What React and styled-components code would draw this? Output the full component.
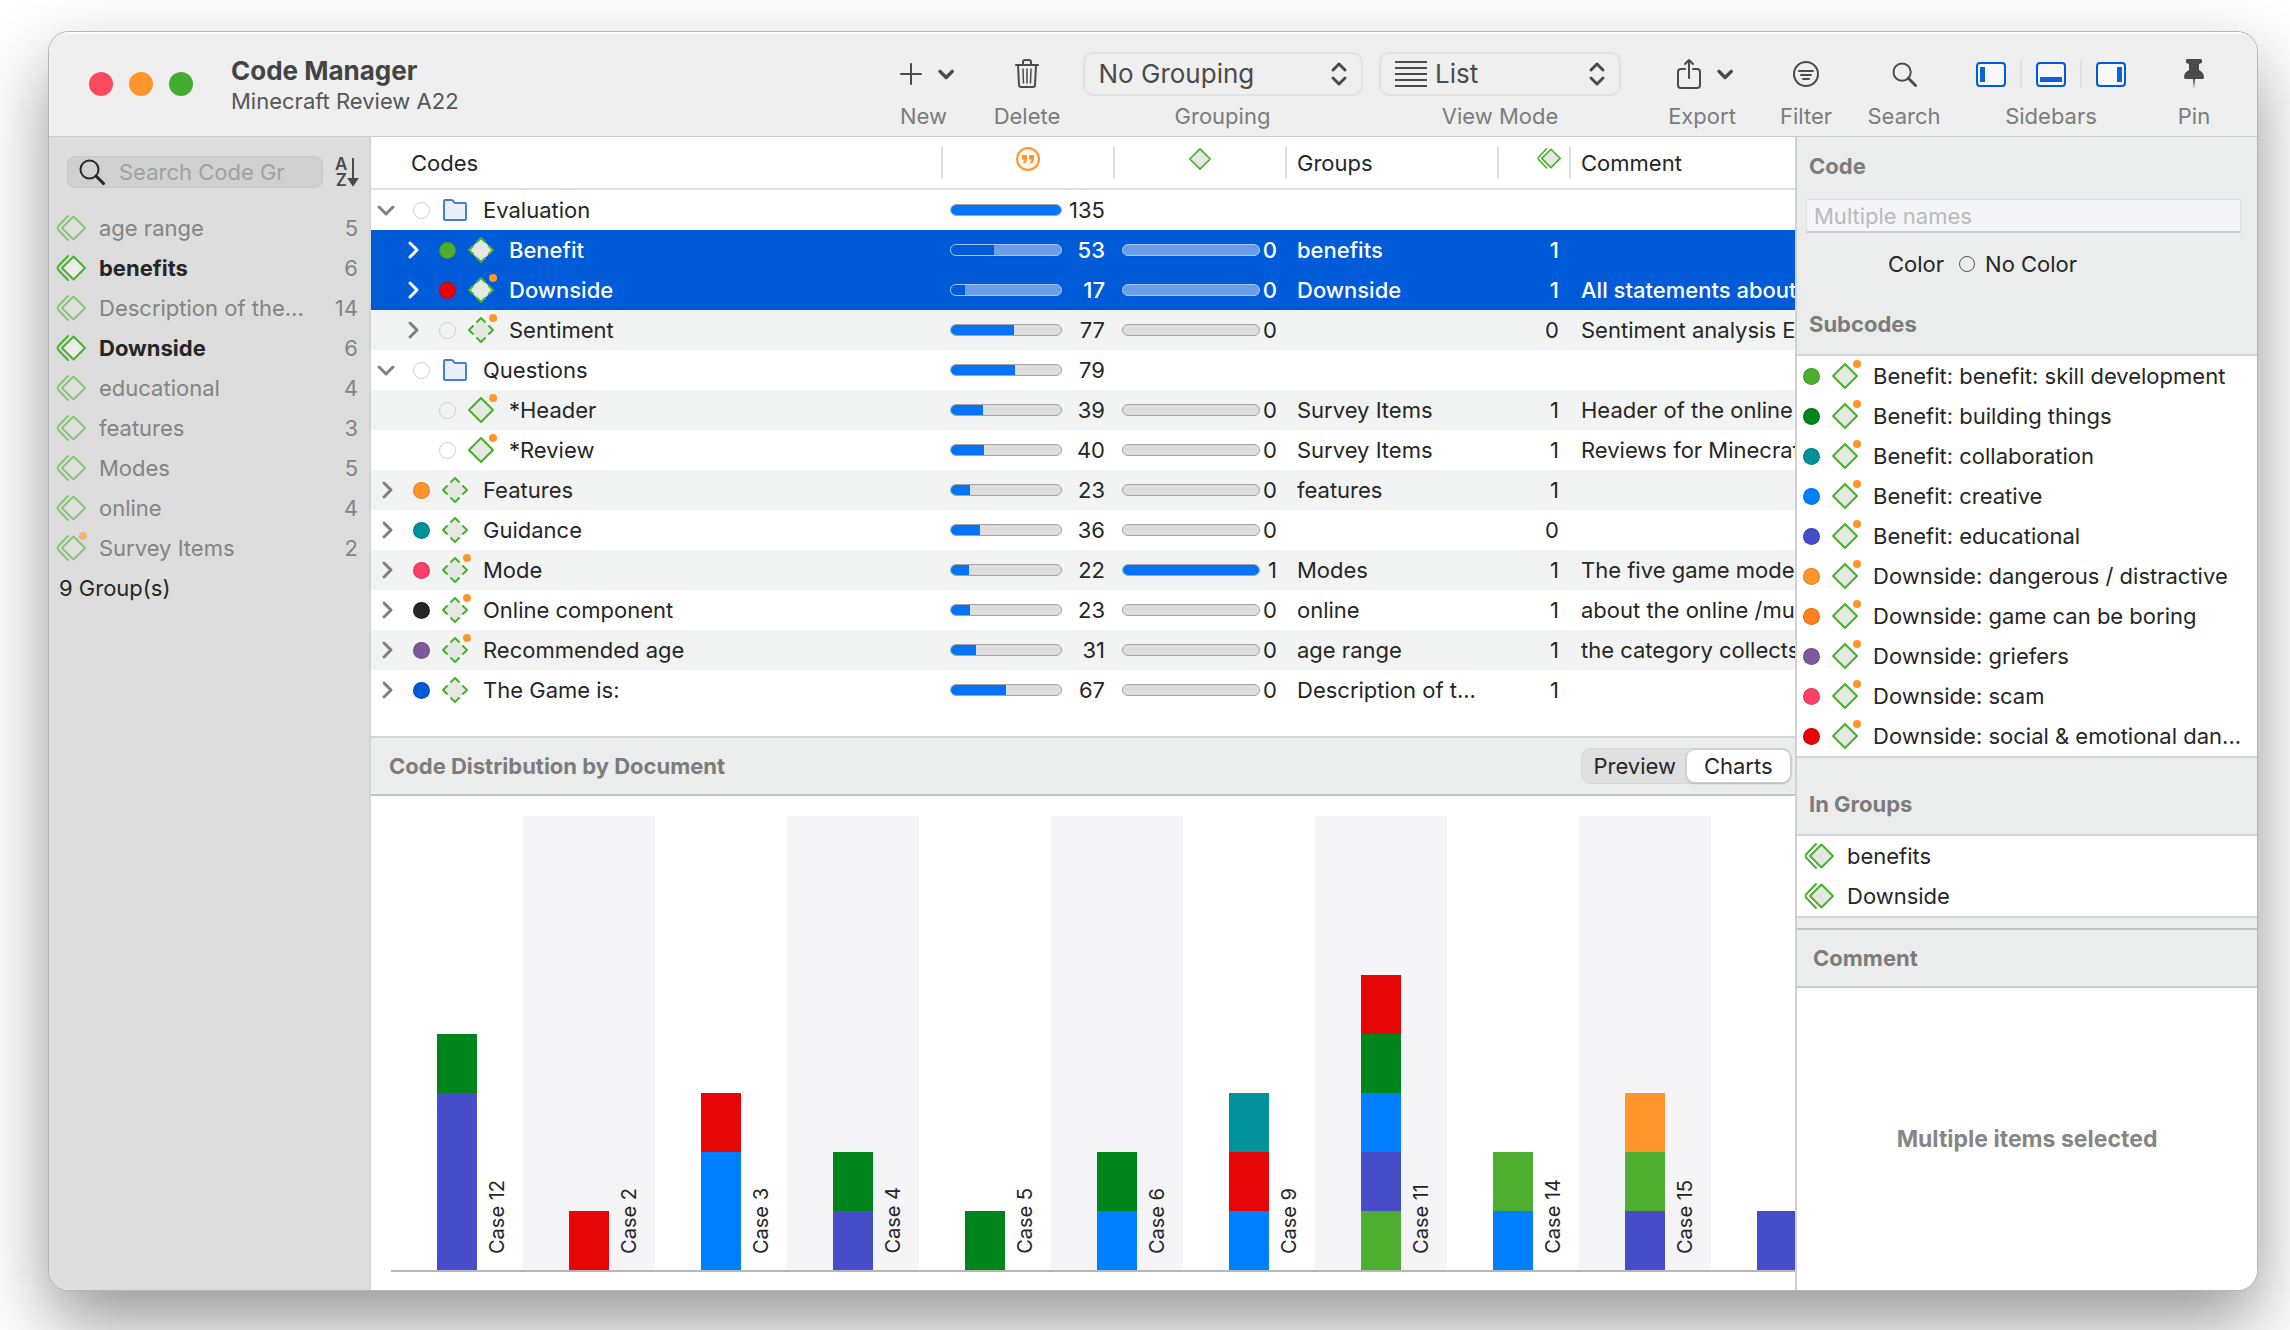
import React from "react";
import styled, { createGlobalStyle, css } from "styled-components";

const GlobalStyle = createGlobalStyle`
    * {
        box-sizing: border-box;
    }
    body {
        margin: 0;
        background: #ffffff;
        color: #262626;
        font-family: Inter, "Liberation Sans", sans-serif;
        font-size: 22px;
        line-height: 28px;
    }
    button, input, select {
        font: inherit;
        color: inherit;
        margin: 0;
        padding: 0;
        border: none;
        background: none;
    }
    h1, h2, p, ul {
        margin: 0;
        padding: 0;
    }
    ul {
        list-style: none;
    }
    svg {
        display: block;
        flex: none;
        overflow: visible;
    }
`

const GREEN = "#4eae30";
const DARK_GREEN = "#00851d";
const TEAL = "#00919b";
const BLUE = "#007fff";
const INDIGO = "#474dc9";
const ORANGE = "#ff952b";
const PURPLE = "#7d5a9e";
const PINK = "#fb4169";
const RED = "#e60608";

const groups = [
    { name: "age range", count: 5 },
    { name: "benefits", count: 6, active: true },
    { name: "Description of the...", count: 14 },
    { name: "Downside", count: 6, active: true },
    { name: "educational", count: 4 },
    { name: "features", count: 3 },
    { name: "Modes", count: 5 },
    { name: "online", count: 4 },
    { name: "Survey Items", count: 2, comment: true },
];

const codes = [
    { name: "Evaluation", folder: true, open: true, quotes: 135 },
    { name: "Benefit", level: 1, color: GREEN, dashed: true, quotes: 53, codes: 0, group: "benefits", groupCount: 1, selected: true },
    { name: "Downside", level: 1, color: RED, dashed: true, note: true, quotes: 17, codes: 0, group: "Downside", groupCount: 1, comment: "All statements about", selected: true },
    { name: "Sentiment", level: 1, dashed: true, note: true, quotes: 77, codes: 0, groupCount: 0, comment: "Sentiment analysis E" },
    { name: "Questions", folder: true, open: true, quotes: 79 },
    { name: "*Header", level: 1, leaf: true, note: true, quotes: 39, codes: 0, group: "Survey Items", groupCount: 1, comment: "Header of the online" },
    { name: "*Review", level: 1, leaf: true, note: true, quotes: 40, codes: 0, group: "Survey Items", groupCount: 1, comment: "Reviews for Minecraft" },
    { name: "Features", color: ORANGE, dashed: true, quotes: 23, codes: 0, group: "features", groupCount: 1 },
    { name: "Guidance", color: TEAL, dashed: true, quotes: 36, codes: 0, groupCount: 0 },
    { name: "Mode", color: PINK, dashed: true, note: true, quotes: 22, codes: 1, group: "Modes", groupCount: 1, comment: "The five game mode" },
    { name: "Online component", color: "#262626", dashed: true, note: true, quotes: 23, codes: 0, group: "online", groupCount: 1, comment: "about the online /mu" },
    { name: "Recommended age", color: PURPLE, dashed: true, note: true, quotes: 31, codes: 0, group: "age range", groupCount: 1, comment: "the category collects" },
    { name: "The Game is:", color: "#0059d8", dashed: true, quotes: 67, codes: 0, group: "Description of t...", groupCount: 1 },
];

const MAX_QUOTES = 135;

const subcodes = [
    { name: "Benefit: benefit: skill development", color: GREEN },
    { name: "Benefit: building things", color: DARK_GREEN },
    { name: "Benefit: collaboration", color: TEAL },
    { name: "Benefit: creative", color: BLUE },
    { name: "Benefit: educational", color: INDIGO },
    { name: "Downside: dangerous / distractive", color: ORANGE },
    { name: "Downside: game can be boring", color: "#ff8120" },
    { name: "Downside: griefers", color: PURPLE },
    { name: "Downside: scam", color: PINK },
    { name: "Downside: social & emotional dan...", color: RED },
];

// segments go from the top of the bar to the axis
const cases = [
    { label: "Case 12", parts: [[DARK_GREEN, 1], [INDIGO, 3]] },
    { label: "Case 2", parts: [[RED, 1]] },
    { label: "Case 3", parts: [[RED, 1], [BLUE, 2]] },
    { label: "Case 4", parts: [[DARK_GREEN, 1], [INDIGO, 1]] },
    { label: "Case 5", parts: [[DARK_GREEN, 1]] },
    { label: "Case 6", parts: [[DARK_GREEN, 1], [BLUE, 1]] },
    { label: "Case 9", parts: [[TEAL, 1], [RED, 1], [BLUE, 1]] },
    { label: "Case 11", parts: [[RED, 1], [DARK_GREEN, 1], [BLUE, 1], [INDIGO, 1], [GREEN, 1]] },
    { label: "Case 14", parts: [[GREEN, 1], [BLUE, 1]] },
    { label: "Case 15", parts: [[ORANGE, 1], [GREEN, 1], [INDIGO, 1]] },
    { label: "", parts: [[INDIGO, 1]] },
];

const UNIT = 59;

function CodeIcon({ dashed, note, size = 26 }) {
    return (
        <svg width={size} height={size} viewBox="0 0 26 26" aria-hidden="true">
            <path d="M13 1 25 13 13 25 1 13Z" fill="#e3e8e0" />
            <path
                d="M13 1 25 13 13 25 1 13Z"
                pathLength="4"
                fill="none"
                stroke={GREEN}
                strokeWidth="2"
                strokeLinejoin="round"
                strokeDasharray={dashed ? "0.76 0.24" : undefined}
                strokeDashoffset={dashed ? "0.38" : undefined}
            />
            {note && <circle cx="25" cy="1" r="4" fill={ORANGE} />}
        </svg>
    );
}

function GroupIcon({ note, fill = "#e3e8e0", scale = 1 }) {
    return (
        <svg width={30 * scale} height={26 * scale} viewBox="0 0 30 26" aria-hidden="true">
            <path d="M17.500 1.500 29 13 17.500 24.500 6 13Z" fill={fill} stroke={GREEN} strokeWidth="2" strokeLinejoin="round" />
            <path d="M12 1 2 11.500Q1 13 2 14.500L12 25" fill="none" stroke={GREEN} strokeWidth="2" strokeLinecap="round" />
            {note && <circle cx="27" cy="1" r="4" fill={ORANGE} />}
        </svg>
    );
}

function FolderIcon() {
    return (
        <svg width="26" height="24" viewBox="0 0 26 24" aria-hidden="true">
            <path d="M2 3Q2 2 3 2H9.500Q10.500 2 11 3L13 5H23Q24 5 24 6V21Q24 22 23 22H3Q2 22 2 21Z" fill="#eaf0fb" stroke="#3f7fd8" strokeWidth="2" strokeLinejoin="round" />
        </svg>
    );
}

function Chevron({ down, width = 3 }) {
    return (
        <svg width="16" height="16" viewBox="0 0 16 16" fill="none" stroke="currentColor" strokeWidth={width} strokeLinecap="round" strokeLinejoin="round" aria-hidden="true">
            <path d={down ? "M0 5 7 12 14 5" : "M5 1 12 8 5 15"} />
        </svg>
    );
}

function UpDown() {
    return (
        <svg width="16" height="24" viewBox="0 0 16 24" fill="none" stroke="#4b4b4b" strokeWidth="3" strokeLinecap="round" strokeLinejoin="round" aria-hidden="true">
            <path d="M2 8 8 2 14 8M2 16 8 22 14 16" />
        </svg>
    );
}

function PanelIcon({ side }) {
    const bar = {
        left: <rect x="4" y="5" width="5" height="15" />,
        bottom: <rect x="4" y="15" width="22" height="5" />,
        right: <rect x="21" y="5" width="5" height="15" />,
    };
    return (
        <svg width="30" height="25" viewBox="0 0 30 25" aria-hidden="true">
            <rect x="1" y="1" width="28" height="23" rx="3" fill="#f6f8fc" stroke="#005bdb" strokeWidth="2" />
            <g fill="#0a62de">{bar[side]}</g>
        </svg>
    );
}

function SearchIcon({ size, color, width }) {
    return (
        <svg width={size} height={size} viewBox="0 0 26 26" fill="none" stroke={color} strokeWidth={width} strokeLinecap="round" aria-hidden="true">
            <circle cx="10.500" cy="10.500" r="9" />
            <path d="M17 17 24.500 24.500" strokeWidth={width + 1} />
        </svg>
    );
}

function Toolbar() {
    return (
        <ToolbarContainer>
            <TitleArea>
                <TrafficLights>
                    <Light $color="#fb4a5d" aria-label="Close" />
                    <Light $color="#ff962c" aria-label="Minimize" />
                    <Light $color="#44ac30" aria-label="Zoom" />
                </TrafficLights>
                <Titles>
                    <WindowTitle>Code Manager</WindowTitle>
                    <WindowSubtitle>Minecraft Review A22</WindowSubtitle>
                </Titles>
            </TitleArea>
            <Tools>
                <Tool $align="flex-start">
                    <ToolIcons>
                        <IconButton aria-label="New code">
                            <svg width="22" height="22" viewBox="0 0 22 22" stroke="#4b4b4b" strokeWidth="2" strokeLinecap="round"><path d="M11 1V21M1 11H21" /></svg>
                        </IconButton>
                        <IconButton aria-label="New options"><SmallChevron><Chevron down width={4} /></SmallChevron></IconButton>
                    </ToolIcons>
                    <ToolLabel>New</ToolLabel>
                </Tool>
                <Tool>
                    <ToolIcons>
                        <IconButton aria-label="Delete">
                            <svg width="24" height="30" viewBox="0 0 24 30" fill="none" stroke="#4b4b4b" strokeWidth="2" strokeLinecap="round" strokeLinejoin="round">
                                <path d="M1 6H23M8 6V3Q8 1 10 1H14Q16 1 16 3V6M3 6 4 26Q4 28 6 28H18Q20 28 20 26L21 6" />
                                <path d="M8 10 8.500 24M12 10V24M16 10 15.500 24" strokeWidth="1.5" />
                            </svg>
                        </IconButton>
                    </ToolIcons>
                    <ToolLabel>Delete</ToolLabel>
                </Tool>
                <Tool>
                    <SelectBox $width="280px">
                        <ToolSelect id="grouping"><option>No Grouping</option></ToolSelect>
                        <UpDown />
                    </SelectBox>
                    <ToolLabel as="label" htmlFor="grouping">Grouping</ToolLabel>
                </Tool>
                <Tool>
                    <SelectBox $width="242px">
                        <svg width="32" height="28" viewBox="0 0 32 28" stroke="#4b4b4b" strokeWidth="2"><path d="M0 2H32M0 8H32M0 14H32M0 20H32M0 26H32" /></svg>
                        <ToolSelect id="view-mode"><option>List</option></ToolSelect>
                        <UpDown />
                    </SelectBox>
                    <ToolLabel as="label" htmlFor="view-mode">View Mode</ToolLabel>
                </Tool>
                <Tool>
                    <ToolIcons $indent="10px">
                        <IconButton aria-label="Export">
                            <svg width="24" height="30" viewBox="0 0 24 30" fill="none" stroke="#4b4b4b" strokeWidth="2" strokeLinecap="round" strokeLinejoin="round">
                                <path d="M8 10H4Q1 10 1 13V26Q1 29 4 29H20Q23 29 23 26V13Q23 10 20 10H16M12 19V1M8 5 12 1 16 5" />
                            </svg>
                        </IconButton>
                        <IconButton aria-label="Export options"><SmallChevron><Chevron down width={4} /></SmallChevron></IconButton>
                    </ToolIcons>
                    <ToolLabel>Export</ToolLabel>
                </Tool>
                <Tool>
                    <ToolIcons>
                        <IconButton aria-label="Filter">
                            <svg width="26" height="26" viewBox="0 0 26 26" fill="none" stroke="#4b4b4b" strokeWidth="2" strokeLinecap="round">
                                <circle cx="13" cy="13" r="12" />
                                <path d="M6 10H20M8 14H18M10 18H16" />
                            </svg>
                        </IconButton>
                    </ToolIcons>
                    <ToolLabel>Filter</ToolLabel>
                </Tool>
                <Tool>
                    <ToolIcons>
                        <IconButton aria-label="Search"><SearchIcon size={25} color="#4b4b4b" width={2} /></IconButton>
                    </ToolIcons>
                    <ToolLabel>Search</ToolLabel>
                </Tool>
                <Tool>
                    <ToolIcons>
                        <IconButton aria-label="Left sidebar"><PanelIcon side="left" /></IconButton>
                        <ToolDivider />
                        <IconButton aria-label="Bottom panel"><PanelIcon side="bottom" /></IconButton>
                        <ToolDivider />
                        <IconButton aria-label="Right sidebar"><PanelIcon side="right" /></IconButton>
                    </ToolIcons>
                    <ToolLabel>Sidebars</ToolLabel>
                </Tool>
                <Tool>
                    <ToolIcons>
                        <IconButton aria-label="Pin">
                            <svg width="22" height="30" viewBox="0 0 22 30" fill="#4b4b4b">
                                <path d="M4 0H18Q19 0 19 1.500V3Q19 4 17.500 4.500L16 5V11Q21 13.500 21 18Q21 20 19.500 20H12L11 30 10 20H2.500Q1 20 1 18Q1 13.500 6 11V5L4.500 4.500Q3 4 3 3V1.500Q3 0 4 0Z" />
                            </svg>
                        </IconButton>
                    </ToolIcons>
                    <ToolLabel>Pin</ToolLabel>
                </Tool>
            </Tools>
        </ToolbarContainer>
    );
}

function GroupSidebar() {
    return (
        <GroupsContainer>
            <SearchRow>
                <SearchField>
                    <SearchIcon size={26} color="#262626" width={2} />
                    <SearchInput type="text" placeholder="Search Code Gr" aria-label="Search Code Groups" />
                </SearchField>
                <SortButton aria-label="Sort">
                    <SortLetters><span>A</span><span>Z</span></SortLetters>
                    <svg width="10" height="28" viewBox="0 0 10 28" fill="none" stroke="#4b4b4b" strokeWidth="2"><path d="M5 0V24" /><path d="M1 21H9L5 27Z" fill="#4b4b4b" /></svg>
                </SortButton>
            </SearchRow>
            <ul>
                {groups.map((group) => (
                    <GroupRow key={group.name} $active={group.active}>
                        <GroupIcon note={group.comment} fill={group.active ? "#eceeeb" : "#e3e5e2"} />
                        <GroupName>{group.name}</GroupName>
                        <GroupCount>{group.count}</GroupCount>
                    </GroupRow>
                ))}
            </ul>
            <GroupTotal>9 Group(s)</GroupTotal>
        </GroupsContainer>
    );
}

function CodeTable() {
    return (
        <TableArea>
            <Table>
                <colgroup>
                    <col style={{ width: 572 }} />
                    <col style={{ width: 172 }} />
                    <col style={{ width: 172 }} />
                    <col style={{ width: 212 }} />
                    <col style={{ width: 72 }} />
                    <col />
                </colgroup>
                <thead>
                    <tr>
                        <HeadCell><HeadContent $first>Codes</HeadContent></HeadCell>
                        <HeadCell aria-label="Quotations">
                            <HeadContent $icon>
                                <svg width="24" height="24" viewBox="0 0 24 24" aria-hidden="true">
                                    <circle cx="12" cy="12" r="11" fill="#fff6ec" stroke={ORANGE} strokeWidth="2" />
                                    <path d="M6 8H11V12Q11 15 8 16.500L7 15Q8.500 14 8.500 12.500H6ZM13 8H18V12Q18 15 15 16.500L14 15Q15.500 14 15.500 12.500H13Z" fill={ORANGE} />
                                </svg>
                            </HeadContent>
                        </HeadCell>
                        <HeadCell aria-label="Codes in code"><HeadContent $icon><CodeIcon size={22} /></HeadContent></HeadCell>
                        <HeadCell><HeadContent>Groups</HeadContent></HeadCell>
                        <HeadCell aria-label="Group count"><HeadContent $icon $end><GroupIcon scale={0.8} /></HeadContent></HeadCell>
                        <HeadCell><HeadContent $last>Comment</HeadContent></HeadCell>
                    </tr>
                </thead>
                <tbody>
                    {codes.map((code) => (
                        <CodeRow key={code.name} $selected={code.selected}>
                            <td>
                                <NameCell $level={code.level || 0}>
                                    {code.leaf ? <Toggle as="span" /> : (
                                        <Toggle aria-label={"Toggle " + code.name} $selected={code.selected}>
                                            <Chevron down={code.open} />
                                        </Toggle>
                                    )}
                                    <Dot $color={code.color} />
                                    {code.folder ? <FolderIcon /> : <CodeIcon dashed={code.dashed} note={code.note} />}
                                    <CodeName>{code.name}</CodeName>
                                </NameCell>
                            </td>
                            <td>
                                <BarCell>
                                    <Track $selected={code.selected}>
                                        <Fill $selected={code.selected} style={{ width: (code.quotes / MAX_QUOTES) * 100 + "%" }} />
                                    </Track>
                                    <Count $wide>{code.quotes}</Count>
                                </BarCell>
                            </td>
                            <td>
                                {code.codes !== undefined && (
                                    <BarCell>
                                        <Track $selected={code.selected}>
                                            <Fill $selected={code.selected} style={{ width: code.codes * 100 + "%" }} />
                                        </Track>
                                        <Count>{code.codes}</Count>
                                    </BarCell>
                                )}
                            </td>
                            <TextCell>{code.group}</TextCell>
                            <NumberCell>{code.groupCount}</NumberCell>
                            <TextCell>{code.comment}</TextCell>
                        </CodeRow>
                    ))}
                </tbody>
            </Table>
        </TableArea>
    );
}

function Distribution() {
    return (
        <>
            <ChartHeader>
                <SectionTitle>Code Distribution by Document</SectionTitle>
                <Segmented>
                    <Segment>Preview</Segment>
                    <Segment $active>Charts</Segment>
                </Segmented>
            </ChartHeader>
            <ChartArea>
                <Plot>
                    {cases.map((item, i) => (
                        <ChartColumn key={i} $band={i % 2 === 1}>
                            <Bar>
                                {item.parts.map(([color, count], j) => (
                                    <BarPart key={j} $color={color} style={{ height: count * UNIT }} />
                                ))}
                            </Bar>
                            <BarLabel>{item.label}</BarLabel>
                        </ChartColumn>
                    ))}
                </Plot>
            </ChartArea>
        </>
    );
}

function Inspector() {
    return (
        <InspectorContainer>
            <CodeSection>
                <SectionTitle>Code</SectionTitle>
                <NameInput type="text" placeholder="Multiple names" aria-label="Code name" />
                <ColorRow>
                    <span id="color-label">Color</span>
                    <ColorButton aria-labelledby="color-label">
                        <Swatch />
                        No Color
                    </ColorButton>
                </ColorRow>
            </CodeSection>
            <InspectorHeading $height="50px"><SectionTitle>Subcodes</SectionTitle></InspectorHeading>
            <InspectorList>
                {subcodes.map((code) => (
                    <SubcodeRow key={code.name}>
                        <Dot $color={code.color} />
                        <CodeIcon note />
                        <CodeName>{code.name}</CodeName>
                    </SubcodeRow>
                ))}
            </InspectorList>
            <InspectorHeading $height="76px"><SectionTitle>In Groups</SectionTitle></InspectorHeading>
            <InspectorList>
                <MemberRow><GroupIcon />benefits</MemberRow>
                <MemberRow><GroupIcon />Downside</MemberRow>
            </InspectorList>
            <CommentHeading><SectionTitle>Comment</SectionTitle></CommentHeading>
            <CommentBody>Multiple items selected</CommentBody>
        </InspectorContainer>
    );
}

export default function App() {
    return (
        <Page>
            <GlobalStyle />
            <Window>
                <Toolbar />
                <Body>
                    <GroupSidebar />
                    <Main>
                        <CodeTable />
                        <Distribution />
                    </Main>
                    <Inspector />
                </Body>
            </Window>
        </Page>
    );
}

const Page = styled.div`
    display: flex;
    min-height: 100vh;
    padding: 32px 33px 40px 49px;
    overflow: hidden;
`

const Window = styled.div`
    display: flex;
    flex-direction: column;
    flex: 1;
    min-width: 0;
    border-radius: 20px;
    overflow: hidden;
    background: #ffffff;
    box-shadow: 0 0 0 1px #b4b6b5, 0 32px 72px rgba(0, 0, 0, 0.42);
`

const ToolbarContainer = styled.header`
    display: flex;
    justify-content: space-between;
    min-height: 105px;
    background: #eeefee;
    border-bottom: 1px solid #c9cbca;
    box-shadow: inset 0 2px 0 #fafbfa;
`

const TitleArea = styled.div`
    display: flex;
    align-items: center;
    gap: 38px;
    padding-left: 40px;
`

const TrafficLights = styled.div`
    display: flex;
    gap: 16px;
`

const Light = styled.button`
    width: 24px;
    height: 24px;
    border-radius: 50%;
    background: ${(props) => props.$color};
`

const Titles = styled.div`
    padding-top: 2px;
`

const WindowTitle = styled.h1`
    color: #444444;
    font-size: 26px;
    font-weight: 700;
    line-height: 32px;
    white-space: nowrap;
`

const WindowSubtitle = styled.p`
    color: #565656;
    white-space: nowrap;
`

const Tools = styled.div`
    display: grid;
    grid-template-columns: 80px 94px 297px 258px 146px 62px 134px 160px 126px;
    padding-top: 20px;
`

const Tool = styled.div`
    display: flex;
    flex-direction: column;
    align-items: ${(props) => props.$align || "center"};
    gap: 6px;
`

const ToolIcons = styled.div`
    display: flex;
    align-items: center;
    gap: 14px;
    height: 44px;
    padding-left: ${(props) => props.$indent || "0"};
`

const IconButton = styled.button`
    display: flex;
    align-items: center;
`

const SmallChevron = styled.span`
    color: #4b4b4b;
    padding: 0 4px;
    svg {
        width: 14px;
        height: 14px;
    }
`

const ToolDivider = styled.span`
    width: 2px;
    height: 28px;
    background: #e0e1e0;
`

const ToolLabel = styled.span`
    color: #7c7c7c;
    white-space: nowrap;
`

const SelectBox = styled.div`
    display: flex;
    align-items: center;
    gap: 8px;
    width: ${(props) => props.$width};
    height: 44px;
    padding: 0 14px;
    border: 2px solid #e2e3e2;
    border-radius: 10px;
`

const ToolSelect = styled.select`
    appearance: none;
    flex: 1;
    min-width: 0;
    color: #4b4b4b;
    font-size: 26px;
    line-height: 32px;
`

const Body = styled.div`
    display: grid;
    grid-template-columns: 322px minmax(0, 1fr) 462px;
    flex: 1;
`

const GroupsContainer = styled.aside`
    padding-top: 19px;
    background: #dcdddc;
    border-right: 2px solid #d2d4d3;
`

const SearchRow = styled.div`
    display: flex;
    align-items: center;
    gap: 12px;
    margin-bottom: 20px;
    padding-left: 18px;
`

const SearchField = styled.div`
    display: flex;
    align-items: center;
    gap: 14px;
    width: 256px;
    height: 32px;
    padding: 0 11px;
    border: 1px solid #c6c8c7;
    border-radius: 8px;
    background: #cfd0cf;
`

const SearchInput = styled.input`
    flex: 1;
    min-width: 0;
    outline: none;
    &::placeholder {
        color: #a0a1a0;
        opacity: 1;
    }
`

const SortButton = styled.button`
    display: flex;
    align-items: center;
    gap: 1px;
`

const SortLetters = styled.span`
    display: flex;
    flex-direction: column;
    color: #4b4b4b;
    font-size: 17px;
    font-weight: 600;
    line-height: 16px;
`

const GroupRow = styled.li`
    display: flex;
    align-items: center;
    gap: 13px;
    height: 40px;
    padding: 0 11px 0 7px;
    color: #838483;
    svg {
        opacity: 0.55;
    }
    ${(props) => props.$active && css`
        svg {
            opacity: 1;
        }
        ${GroupName} {
            color: #262626;
            font-weight: 700;
        }
    `}
`

const GroupName = styled.span`
    flex: 1;
    white-space: nowrap;
`

const GroupCount = styled.span`
    color: #838483;
`

const GroupTotal = styled.p`
    padding: 6px 10px;
`

const Main = styled.main`
    display: flex;
    flex-direction: column;
    min-width: 0;
`

const TableArea = styled.section`
    padding-bottom: 26px;
    overflow: hidden;
`

const Table = styled.table`
    width: 100%;
    table-layout: fixed;
    border-collapse: separate;
    border-spacing: 0;
    td, th {
        padding: 0;
    }
`

const HeadCell = styled.th`
    height: 53px;
    border-bottom: 2px solid #dfe0df;
    font-weight: 400;
    text-align: left;
    vertical-align: middle;
`

const HeadContent = styled.div`
    display: flex;
    align-items: center;
    height: 32px;
    padding-left: ${(props) => (props.$first ? "40px" : "10px")};
    border-right: ${(props) => (props.$last ? "none" : "2px solid #dedfde")};
    ${(props) => props.$icon && css`
        justify-content: ${props.$end ? "flex-end" : "center"};
        padding: 0 ${props.$end ? "8px" : "0"} 8px 0;
    `}
`

const CodeRow = styled.tr`
    height: 40px;
    &:nth-child(even) {
        background: #f2f3f3;
    }
    ${(props) => props.$selected && css`
        && {
            background: #005bd8;
            color: #ffffff;
            font-weight: 500;
        }
    `}
`

const NameCell = styled.div`
    display: flex;
    align-items: center;
    gap: 12px;
    padding-left: ${(props) => 8 + props.$level * 26}px;
`

const CodeName = styled.span`
    padding-left: 3px;
    white-space: nowrap;
`

const Toggle = styled.button`
    display: flex;
    width: 22px;
    color: ${(props) => (props.$selected ? "#ffffff" : "#7f807f")};
`

const Dot = styled.span`
    flex: none;
    width: 17px;
    height: 17px;
    border: 1px solid ${(props) => (props.$color ? "rgba(0, 0, 0, 0.15)" : "#cfd0cf")};
    border-radius: 50%;
    background: ${(props) => props.$color || "transparent"};
`

const BarCell = styled.div`
    display: flex;
    align-items: center;
    padding: 0 10px 0 7px;
`

const Track = styled.div`
    flex: 1;
    height: 12px;
    border: 1px solid ${(props) => (props.$selected ? "#a9c6f3" : "#a3a4a3")};
    border-radius: 6px;
    background: ${(props) => (props.$selected ? "#6c9de8" : "#dcdddc")};
    overflow: hidden;
`

const Fill = styled.div`
    height: 100%;
    background: ${(props) => (props.$selected ? "#005bd8" : "#0573f8")};
`

const Count = styled.span`
    width: ${(props) => (props.$wide ? "43px" : "17px")};
    text-align: right;
`

const TextCell = styled.td`
    && {
        padding-left: 10px;
    }
    overflow: hidden;
    white-space: nowrap;
`

const NumberCell = styled.td`
    && {
        padding-right: 12px;
    }
    text-align: right;
`

const ChartHeader = styled.div`
    display: flex;
    align-items: center;
    justify-content: space-between;
    height: 60px;
    padding: 0 3px 0 18px;
    background: #ebecec;
    border-top: 2px solid #d3d5d4;
    border-bottom: 2px solid #c3c5c4;
`

const SectionTitle = styled.h2`
    color: #7b7c7b;
    font-size: 22px;
    font-weight: 700;
    line-height: 28px;
`

const Segmented = styled.div`
    display: flex;
    height: 36px;
    width: 211px;
    padding: 1px;
    border: 1px solid #d6d8d7;
    border-radius: 10px;
    background: #dedfde;
`

const Segment = styled.button`
    flex: 1;
    border-radius: 8px;
    ${(props) => props.$active && css`
        background: #ffffff;
        box-shadow: 0 0 0 1px #cccecd, 0 1px 3px rgba(0, 0, 0, 0.3);
    `}
`

const ChartArea = styled.section`
    display: flex;
    flex: 1;
    min-height: 400px;
    padding: 20px 0 18px 20px;
    overflow: hidden;
`

const Plot = styled.div`
    display: flex;
    flex: 1;
    min-width: 0;
    border-bottom: 2px solid #b5b6b5;
`

const ChartColumn = styled.div`
    display: flex;
    align-items: flex-end;
    flex: none;
    width: 132px;
    padding-left: 46px;
    gap: 6px;
    background: ${(props) => (props.$band ? "#f5f5f8" : "transparent")};
`

const Bar = styled.div`
    width: 40px;
`

const BarPart = styled.div`
    background: ${(props) => props.$color};
`

const BarLabel = styled.span`
    writing-mode: vertical-rl;
    transform: rotate(180deg);
    margin-bottom: 16px;
    font-size: 20px;
    white-space: nowrap;
`

const InspectorContainer = styled.aside`
    display: flex;
    flex-direction: column;
    min-width: 0;
    background: #ebecec;
    border-left: 2px solid #d0d2d1;
`

const CodeSection = styled.section`
    padding: 15px 16px 0 9px;
    height: 167px;
    ${SectionTitle} {
        padding-left: 3px;
    }
`

const NameInput = styled.input`
    display: block;
    width: 100%;
    height: 34px;
    margin-top: 19px;
    padding: 0 7px;
    border: 1px solid #dfe0e0;
    border-bottom: 2px solid #cdcfce;
    background: #f5f5f7;
    outline: none;
    &::placeholder {
        color: #b9babb;
        opacity: 1;
    }
`

const ColorRow = styled.div`
    display: flex;
    align-items: center;
    gap: 15px;
    margin-top: 17px;
    padding-left: 82px;
`

const ColorButton = styled.button`
    display: flex;
    align-items: center;
    gap: 10px;
`

const Swatch = styled.span`
    width: 16px;
    height: 16px;
    border: 1px solid #565656;
    border-radius: 50%;
`

const InspectorHeading = styled.div`
    display: flex;
    align-items: flex-end;
    height: ${(props) => props.$height};
    padding: 0 0 16px 12px;
`

const InspectorList = styled.ul`
    background: #ffffff;
    border-top: 2px solid #d3d5d4;
    border-bottom: 2px solid #d3d5d4;
`

const SubcodeRow = styled.li`
    display: flex;
    align-items: center;
    gap: 12px;
    height: 40px;
    padding-left: 6px;
`

const MemberRow = styled.li`
    display: flex;
    align-items: center;
    gap: 13px;
    height: 40px;
    padding-left: 7px;
`

const CommentHeading = styled.div`
    height: 60px;
    margin-top: 10px;
    padding: 14px 0 0 16px;
    border-top: 2px solid #c3c5c4;
    border-bottom: 2px solid #c9cbca;
`

const CommentBody = styled.p`
    display: flex;
    align-items: center;
    justify-content: center;
    flex: 1;
    background: #ffffff;
    color: #858685;
    font-size: 23px;
    font-weight: 700;
`
